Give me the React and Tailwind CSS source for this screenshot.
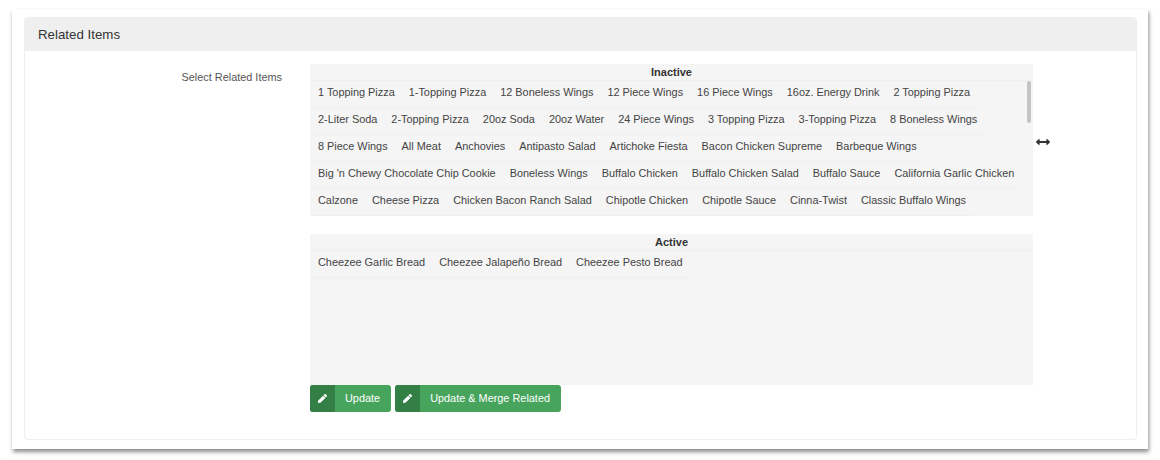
import { FaArrowsAltH, FaPen } from 'react-icons/fa'

const inactive = [
  '1 Topping Pizza', '1-Topping Pizza', '12 Boneless Wings', '12 Piece Wings', '16 Piece Wings', '16oz. Energy Drink', '2 Topping Pizza',
  '2-Liter Soda', '2-Topping Pizza', '20oz Soda', '20oz Water', '24 Piece Wings', '3 Topping Pizza', '3-Topping Pizza', '8 Boneless Wings',
  '8 Piece Wings', 'All Meat', 'Anchovies', 'Antipasto Salad', 'Artichoke Fiesta', 'Bacon Chicken Supreme', 'Barbeque Wings',
  "Big 'n Chewy Chocolate Chip Cookie", 'Boneless Wings', 'Buffalo Chicken', 'Buffalo Chicken Salad', 'Buffalo Sauce', 'California Garlic Chicken',
  'Calzone', 'Cheese Pizza', 'Chicken Bacon Ranch Salad', 'Chipotle Chicken', 'Chipotle Sauce', 'Cinna-Twist', 'Classic Buffalo Wings',
]

const active = ['Cheezee Garlic Bread', 'Cheezee Jalapeño Bread', 'Cheezee Pesto Bread']

function ItemList({ title, items, scrollbar }) {
  return (
    <div className={`relative w-[723px] bg-[#f5f5f5] ${scrollbar ? 'h-[152px]' : 'h-[151px]'}`}>
      <div className="h-[17px] border-b border-[#efefef] text-center text-[11px] leading-[17px] font-bold text-[#333]">
        {title}
      </div>
      <div className="flex flex-wrap content-start pl-px">
        {items.map((item) => (
          <span
            key={item}
            className="h-[27px] px-[7px] border-b border-[#efefef] text-[10.9px] leading-[22px] text-[#444] whitespace-nowrap"
          >
            {item}
          </span>
        ))}
      </div>
      {scrollbar && <div className="absolute right-[2px] top-[17px] w-[4px] h-[42px] rounded-sm bg-[#c4c4c4]" />}
    </div>
  )
}

function ActionButton({ label }) {
  return (
    <button className="flex h-[27px] rounded-[3px] overflow-hidden bg-[#47a45c] text-white text-[10.9px]">
      <span className="flex items-center justify-center w-[25px] h-full bg-[#337f45]">
        <FaPen className="w-[9px] h-[9px]" />
      </span>
      <span className="pl-[10px] pr-[11px] leading-[27px]">{label}</span>
    </button>
  )
}

export default function App() {
  return (
    <div className="min-h-screen bg-white pt-[9px] pl-[12px] font-['Liberation_Sans',sans-serif]">
      <div className="w-[1136px] h-[440px] bg-white pt-[8px] px-[12px] shadow-[1px_3px_4px_rgba(0,0,0,0.45)]">
        {/* Panel */}
        <div className="w-[1113px] h-[423px] rounded-[4px] border border-[#efefef] border-t-0">
          <div className="h-[34px] px-[13px] rounded-t-[4px] bg-[#efefef] text-[13.3px] leading-[35px] text-[#333]">
            Related Items
          </div>
          <div className="flex pt-[13px]">
            <label className="w-[257px] pt-[6px] text-right text-[10.9px] leading-[14px] text-[#555]">
              Select Related Items
            </label>
            <div className="ml-[28px]">
              <div className="flex items-center gap-[3px]">
                <ItemList title="Inactive" items={inactive} scrollbar />
                <FaArrowsAltH className="w-[14px] h-[14px] mt-[4px] text-[#333]" />
              </div>
              <div className="mt-[18px]">
                <ItemList title="Active" items={active} />
              </div>
              <div className="flex gap-[4px]">
                <ActionButton label="Update" />
                <ActionButton label="Update & Merge Related" />
              </div>
            </div>
          </div>
        </div>
      </div>
    </div>
  )
}
